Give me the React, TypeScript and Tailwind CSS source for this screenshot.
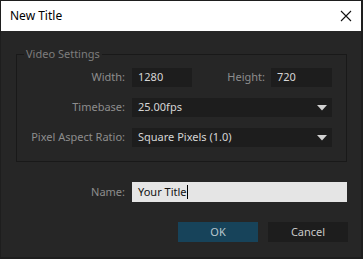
import React from 'react';

function Caret() {
  return (
    <svg width="10" height="6" viewBox="0 0 10 6" className="shrink-0">
      <path d="M0 0 H10 L5 5.5 Z" fill="#d2d2d2" />
    </svg>
  );
}

export default function App() {
  const font = { fontFamily: '"Noto Sans", "Liberation Sans", sans-serif' };

  return (
    <div
      className="w-[363px] h-[259px] bg-[#262626] border-t border-l border-r-2 border-b-2 border-[#1e1e1e] flex flex-col text-[11px] overflow-hidden"
      style={font}
    >
      {/* Title bar */}
      <div className="h-[30px] bg-white flex items-center justify-between pl-[9px] pr-[9px] shrink-0 text-[12px]">
        <span className="text-black">New Title</span>
        <svg width="12" height="12" viewBox="0 0 12 12">
          <path d="M1 1 L11 11 M11 1 L1 11" stroke="#111" strokeWidth="1.1" />
        </svg>
      </div>

      {/* Video settings group */}
      <div className="relative mt-[23px] ml-[15px] w-[331px] border border-[#191919] pt-[13px] pb-[14px] flex flex-col gap-[11px]">
        <span className="absolute left-[7px] -top-[9px] px-[2px] bg-[#262626] text-[#7d7d7d] leading-[16px]">
          Video Settings
        </span>

        <div className="flex items-center h-[19px]">
          <span className="w-[108px] text-right text-[#8d8d8d]">Width:</span>
          <div className="ml-[7px] w-[60px] h-full bg-[#1d1d1d] text-[#d6d6d6] flex items-center pl-[6px]">1280</div>
          <span className="w-[73px] text-right text-[#8d8d8d]">Height:</span>
          <div className="ml-[6px] w-[61px] h-full bg-[#1d1d1d] text-[#d6d6d6] flex items-center pl-[6px]">720</div>
        </div>

        <div className="flex items-center h-[19px]">
          <span className="w-[108px] text-right text-[#8d8d8d]">Timebase:</span>
          <div className="ml-[7px] w-[200px] h-full bg-[#1d1d1d] text-[#d6d6d6] flex items-center justify-between pl-[6px] pr-[5px]">
            <span>25.00fps</span>
            <Caret />
          </div>
        </div>

        <div className="flex items-center h-[19px]">
          <span className="w-[108px] text-right text-[#8d8d8d]">Pixel Aspect Ratio:</span>
          <div className="ml-[7px] w-[200px] h-full bg-[#1d1d1d] text-[#d6d6d6] flex items-center justify-between pl-[6px] pr-[5px]">
            <span>Square Pixels (1.0)</span>
            <Caret />
          </div>
        </div>
      </div>

      {/* Name */}
      <div className="flex items-center h-[20px] mt-[20px] ml-[16px]">
        <span className="w-[108px] text-right text-[#8d8d8d]">Name:</span>
        <div className="ml-[7px] w-[215px] h-full bg-[#e5e5e5] text-[#111] flex items-center pl-[6px]">
          <span>Your Title</span>
          <span className="w-px h-[14px] bg-black" />
        </div>
      </div>

      {/* Buttons */}
      <div className="flex justify-end gap-[10px] mt-[20px] mr-[13px]">
        <button className="w-[80px] h-[20px] bg-[#17435a] text-[#b9c6cd] flex items-center justify-center">OK</button>
        <button className="w-[80px] h-[20px] bg-[#1d1d1d] text-[#c9c9c9] flex items-center justify-center">Cancel</button>
      </div>
    </div>
  );
}
